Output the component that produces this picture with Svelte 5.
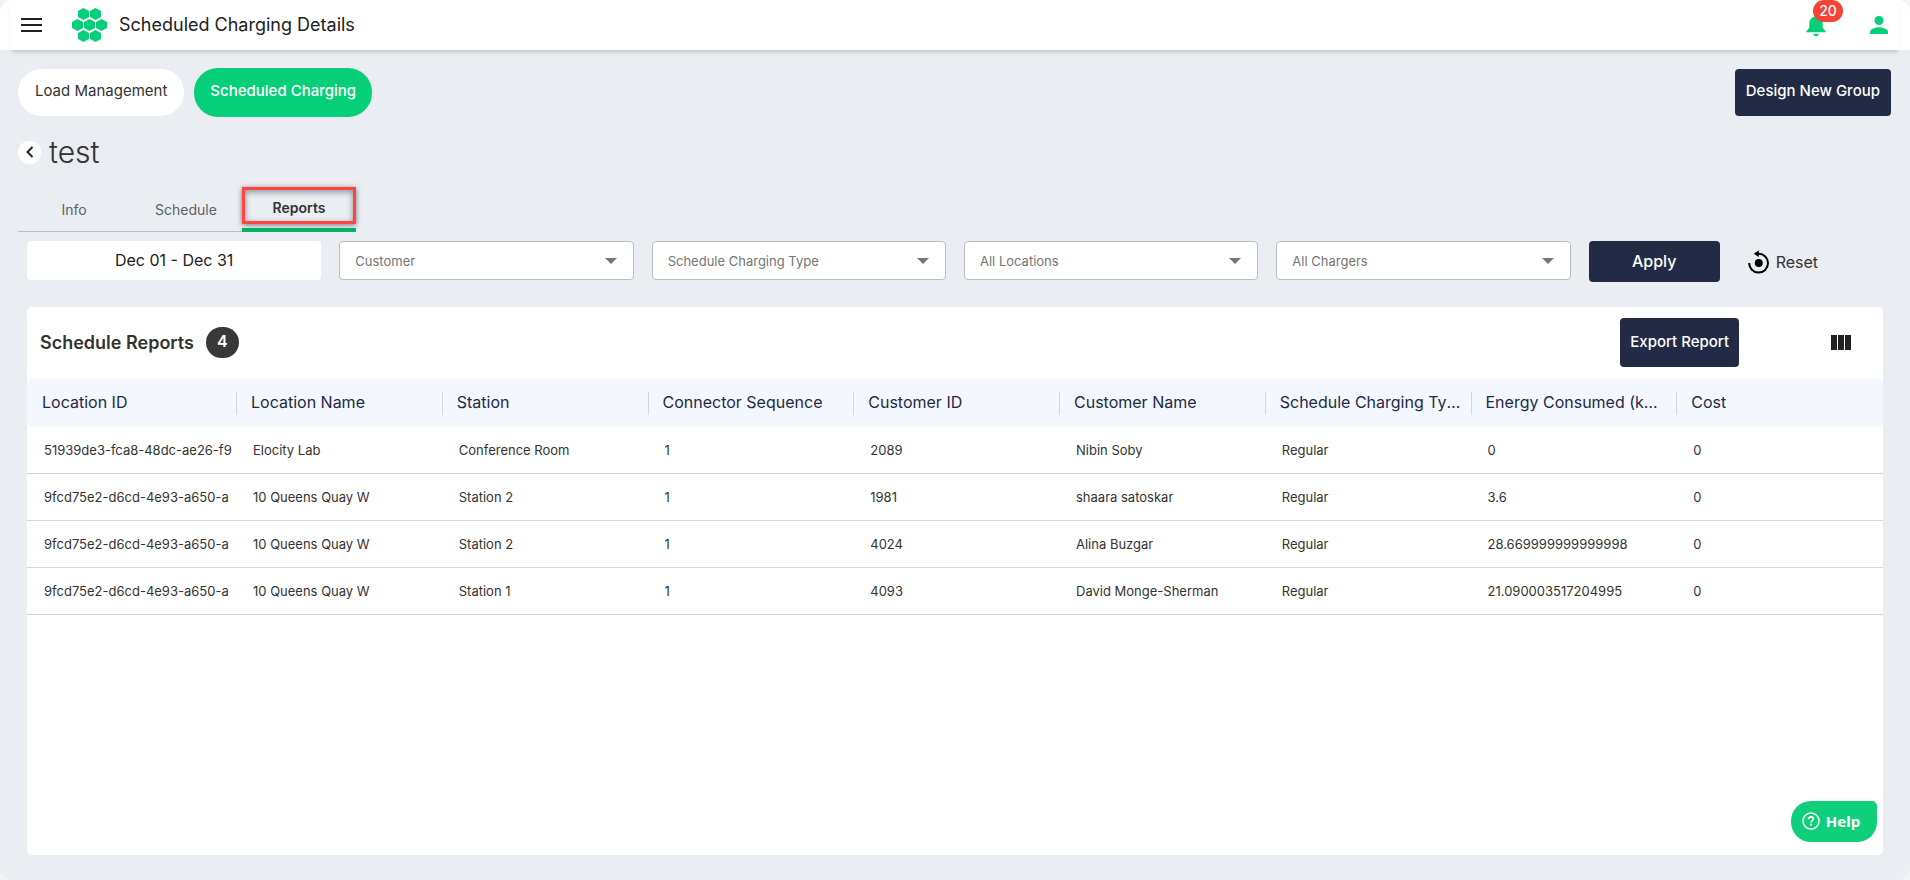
<script>
  const filters = ['Customer', 'Schedule Charging Type', 'All Locations', 'All Chargers'];
  const columns = [
    'Location ID', 'Location Name', 'Station', 'Connector Sequence', 'Customer ID',
    'Customer Name', 'Schedule Charging Type', 'Energy Consumed (kWh)', 'Cost'
  ];
  const rows = [
    ['51939de3-fca8-48dc-ae26-f9', 'Elocity Lab', 'Conference Room', '1', '2089', 'Nibin Soby', 'Regular', '0', '0'],
    ['9fcd75e2-d6cd-4e93-a650-a', '10 Queens Quay W', 'Station 2', '1', '1981', 'shaara satoskar', 'Regular', '3.6', '0'],
    ['9fcd75e2-d6cd-4e93-a650-a', '10 Queens Quay W', 'Station 2', '1', '4024', 'Alina Buzgar', 'Regular', '28.669999999999998', '0'],
    ['9fcd75e2-d6cd-4e93-a650-a', '10 Queens Quay W', 'Station 1', '1', '4093', 'David Monge-Sherman', 'Regular', '21.090003517204995', '0']
  ];
  const hexCells = [[11.5, 6], [23.5, 6], [5.5, 17], [17.5, 17], [29.5, 17], [11.5, 28], [23.5, 28]];
  const hex = (x, y) =>
    `${x},${y - 6} ${x + 5.5},${y - 3} ${x + 5.5},${y + 3} ${x},${y + 6} ${x - 5.5},${y + 3} ${x - 5.5},${y - 3}`;
</script>

<div class="page">
  <header class="bar">
    <button class="icon menu" aria-label="Menu">
      <svg width="22" height="14" viewBox="0 0 22 14"><path d="M0 0h21v2H0zM0 6h21v2H0zM0 12h21v2H0z" fill="#212121" /></svg>
    </button>
    <svg class="logo" width="35" height="34" viewBox="0 0 35 34">
      {#each hexCells as [x, y]}
        <polygon points={hex(x, y)} fill="#07cf79" />
      {/each}
    </svg>
    <h1>Scheduled Charging Details</h1>
    <button class="icon bell" aria-label="Notifications">
      <svg width="20" height="24" viewBox="0 0 20 24" fill="#07cf79">
        <path d="M10 1.500c-.9 0-1.600.7-1.600 1.600v.6C5.400 4.400 3.300 7 3.300 10.200v4.600L.4 18.200v1.100h19.200v-1.100l-2.900-3.400v-4.600c0-3.200-2.100-5.800-5.100-6.500v-.6c0-.9-.7-1.600-1.600-1.600z" />
        <path d="M7.200 20.800h5.600c0 1.500-1.200 2.500-2.800 2.500s-2.800-1-2.800-2.500z" />
      </svg>
      <span class="count">20</span>
    </button>
    <button class="icon" aria-label="Account">
      <svg width="18" height="18" viewBox="0 0 18 18" fill="#07cf79"><circle cx="9" cy="4.500" r="4.500" /><path d="M0 18v-2.200c0-3 6-4.600 9-4.600s9 1.600 9 4.600V18z" /></svg>
    </button>
  </header>

  <main>
    <div class="modes">
      <button class="pill">Load Management</button>
      <button class="pill on">Scheduled Charging</button>
      <button class="dark design">Design New Group</button>
    </div>

    <div class="heading">
      <button class="back" aria-label="Back">
        <svg width="8" height="12" viewBox="0 0 8 12"><path d="M6.500 1 1.500 6l5 5" fill="none" stroke="#222" stroke-width="2" /></svg>
      </button>
      <h2>test</h2>
    </div>

    <nav class="tabs">
      <button>Info</button>
      <button>Schedule</button>
      <button class="current"><span>Reports</span></button>
    </nav>

    <form class="filters" onsubmit={(e) => e.preventDefault()}>
      <input class="date" type="text" value="Dec 01 - Dec 31" aria-label="Date range" />
      {#each filters as name}
        <label class="pick">
          <select aria-label={name}><option>{name}</option></select>
          <svg width="12" height="6" viewBox="0 0 12 6"><path d="M0 0h12L6 6z" fill="#757575" /></svg>
        </label>
      {/each}
      <div class="actions">
        <button class="dark apply">Apply</button>
        <button class="reset" type="reset">
          <svg width="22" height="24" viewBox="0 0 22 24">
            <path d="M1.200 13A9.400 9.400 0 1 0 10.600 3.800H7.500" fill="none" stroke="#000" stroke-width="2" />
            <path d="M10.800 .5v6.600L5.800 3.800z" />
            <circle cx="10.800" cy="13" r="4" />
          </svg>
          Reset
        </button>
      </div>
    </form>

    <section class="card">
      <div class="top">
        <h3>Schedule Reports</h3>
        <span class="total">4</span>
        <button class="dark export">Export Report</button>
        <button class="icon" aria-label="Columns">
          <svg width="20" height="15" viewBox="0 0 20 15" fill="#212121"><path d="M0 0h6v15H0zM7 0h6v15H7zM14 0h6v15h-6z" /></svg>
        </button>
      </div>
      <table>
        <thead>
          <tr>{#each columns as c}<th><div>{c}</div></th>{/each}</tr>
        </thead>
        <tbody>
          {#each rows as row}
            <tr>{#each row as cell}<td><div>{cell}</div></td>{/each}</tr>
          {/each}
        </tbody>
      </table>
    </section>
  </main>

  <button class="help">
    <svg width="18" height="18" viewBox="0 0 18 18" fill="none" stroke="#fff">
      <circle cx="9" cy="9" r="8" stroke-width="1.500" />
      <path d="M6.600 7.200C6.600 5.700 7.600 4.900 9 4.900s2.400.8 2.400 2.100c0 1.700-2.400 1.700-2.400 3.600" stroke-width="1.600" />
      <path d="M9 11.800v1.600" stroke-width="1.700" />
    </svg>
    Help
  </button>
</div>

<style>
  :global(body) { margin: 0; background: #f3f3f3; }
  * { box-sizing: border-box; }
  button, input, select { font-family: inherit; }
  button { border: 0; padding: 0; cursor: pointer; background: none; color: inherit; }
  svg { display: block; flex: none; }
  h1, h2, h3 { margin: 0; }

  .page {
    min-height: 100vh;
    display: flex;
    flex-direction: column;
    background: linear-gradient(#fff 50px, #eaedf2 50px);
    border-radius: 12px;
    overflow: hidden;
    font-family: Inter, "Open Sans", sans-serif;
    color: #333;
  }

  .bar {
    height: 50px;
    margin: 0 10px;
    padding: 0 12px 0 11px;
    display: flex;
    align-items: center;
    background: #fff;
    box-shadow: 0 4px 4px -2px rgba(0, 0, 0, 0.18);
  }
  .logo { margin: 0 12px 0 29px; }
  h1 { flex: 1; font-size: 18px; font-weight: 400; line-height: 22px; color: #212121; }
  .bell { position: relative; margin-right: 44px; }
  .count {
    position: absolute;
    left: 7px;
    top: -13px;
    width: 30px;
    height: 22px;
    border-radius: 11px;
    background: #f44336;
    color: #fff;
    font-size: 14px;
    font-weight: 500;
    line-height: 21px;
  }

  main { flex: 1; display: flex; flex-direction: column; padding: 18px 19px 25px 18px; }

  .modes { display: flex; align-items: center; gap: 10px; height: 49px; }
  .pill { height: 47px; padding: 0 17px 4px; border-radius: 24px; background: #fff; font-size: 15px; }
  .pill.on { height: 49px; padding: 0 16px 4px; background: #07cf79; color: #fff; font-weight: 500; }
  .dark { background: #232a45; color: #fff; border-radius: 4px; font-size: 15px; font-weight: 500; }
  .design { height: 47px; padding: 0 11px 4px; margin-left: auto; }

  .heading { display: flex; align-items: center; gap: 8px; height: 40px; margin-top: 15px; }
  .back {
    width: 23px;
    height: 23px;
    border-radius: 50%;
    background: #fff;
    display: grid;
    place-items: center;
  }
  h2 { font-size: 30px; font-weight: 300; line-height: 39px; }

  .tabs { display: flex; height: 45px; margin-top: 15px; }
  .tabs button { width: 112px; border-bottom: 1px solid #babdc4; font-size: 14px; color: #5f6266; }
  .tabs button.current { width: 114px; padding: 0 0 4px; border-bottom: 4px solid #06b567; font-weight: 600; color: #333; }
  .current span {
    display: block;
    height: 37px;
    border: 3px solid #ff4444;
    line-height: 36px;
    box-shadow: 0 1px 5px rgba(0, 0, 0, 0.5), inset 0 2px 6px rgba(0, 0, 0, 0.4);
  }

  .filters {
    display: grid;
    grid-template-columns: repeat(6, minmax(0, 1fr));
    gap: 18px;
    margin: 9px 8px 0 9px;
    align-items: start;
  }
  .date, select { width: 100%; height: 39px; border-radius: 4px; background: #fff; }
  .date { border: 0; text-align: center; font-size: 16px; color: #212121; padding: 0 0 2px; }
  .pick { display: grid; align-items: center; }
  .pick > * { grid-area: 1 / 1; }
  .pick svg { justify-self: end; margin-right: 17px; pointer-events: none; }
  select { appearance: none; border: 1px solid #babdc0; padding: 0 40px 0 15px; font-size: 13px; color: #757575; }
  .actions { display: flex; align-items: center; gap: 28px; }
  .apply { width: 131px; height: 41px; padding-bottom: 2px; font-size: 16px; }
  .reset { display: flex; align-items: center; gap: 6px; font-size: 16px; line-height: 22px; }

  .card { flex: 1; margin: 25px 8px 0 9px; border-radius: 5px; background: #fff; }
  .top { display: flex; align-items: center; height: 72px; padding: 0 32px 2px 13px; }
  h3 { font-size: 18px; font-weight: 600; }
  .total {
    margin-left: 12px;
    width: 33px;
    height: 31px;
    border-radius: 16px;
    background: #383838;
    color: #fff;
    font-size: 16px;
    font-weight: 600;
    line-height: 29px;
    text-align: center;
  }
  .export { height: 49px; padding: 0 10px 2px; margin: 0 92px 0 auto; }

  table { width: 100%; table-layout: fixed; border-collapse: separate; border-spacing: 0; }
  th, td { padding: 0; text-align: left; font-weight: 400; }
  th { width: 11.1%; height: 48px; background: #f4f7fe; }
  th:first-child { width: 210px; border-radius: 5px 0 0 5px; }
  th div {
    height: 23px;
    padding: 0 10px 0 14px;
    border-right: 1px solid #d3d7e0;
    font-size: 16px;
    line-height: 21px;
    color: #232a45;
    white-space: nowrap;
    overflow: hidden;
    text-overflow: ellipsis;
  }
  th:first-child div { padding-left: 15px; }
  th:last-child { border-radius: 0 5px 5px 0; }
  th:last-child div { border: 0; }
  td { height: 47px; border-bottom: 1px solid #d3d5da; }
  td div { margin: 0 2px 0 16px; font-size: 13px; line-height: 20px; white-space: nowrap; overflow: hidden; }
  td:first-child div { margin-left: 17px; }

  .help {
    position: fixed;
    right: 33px;
    bottom: 38px;
    width: 86px;
    height: 41px;
    padding: 0 6px 1px 0;
    display: flex;
    align-items: center;
    justify-content: center;
    gap: 6px;
    border-radius: 20px 5px 20px 20px;
    background: #10cf7b;
    color: #fff;
    font-family: "Noto Sans", "Open Sans", sans-serif;
    font-size: 15px;
    font-weight: 700;
  }
</style>
